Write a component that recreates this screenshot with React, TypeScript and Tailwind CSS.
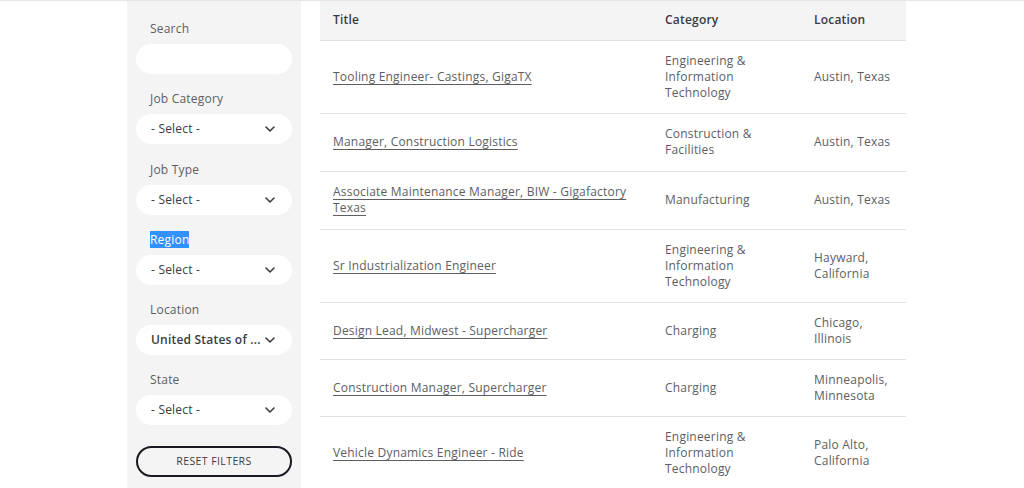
import { ReactNode } from 'react';

type Job = { title: string; category: string; location: string; h: string };

const jobs: Job[] = [
  { title: 'Tooling Engineer- Castings, GigaTX', category: 'Engineering & Information Technology', location: 'Austin, Texas', h: 'h-[73px]' },
  { title: 'Manager, Construction Logistics', category: 'Construction & Facilities', location: 'Austin, Texas', h: 'h-[58px]' },
  { title: 'Associate Maintenance Manager, BIW - Gigafactory Texas', category: 'Manufacturing', location: 'Austin, Texas', h: 'h-[58px]' },
  { title: 'Sr Industrialization Engineer', category: 'Engineering & Information Technology', location: 'Hayward, California', h: 'h-[73px]' },
  { title: 'Design Lead, Midwest - Supercharger', category: 'Charging', location: 'Chicago, Illinois', h: 'h-[57px]' },
  { title: 'Construction Manager, Supercharger', category: 'Charging', location: 'Minneapolis, Minnesota', h: 'h-[57px]' },
  { title: 'Vehicle Dynamics Engineer - Ride', category: 'Engineering & Information Technology', location: 'Palo Alto, California', h: 'h-[73px]' },
];

function Chevron() {
  return (
    <svg width="10" height="6" viewBox="0 0 10 6" fill="none" className="shrink-0">
      <path d="M1 1l4 4 4-4" stroke="#393c41" strokeWidth="1.6" strokeLinecap="round" strokeLinejoin="round" />
    </svg>
  );
}

function Field({ label, children }: { label: ReactNode; children: ReactNode }) {
  return (
    <div className="mb-[17.3px]">
      <div className="h-4 pl-[14px] text-[12px] leading-4 text-[#5c5e62]">{label}</div>
      <div className="mt-[7px]">{children}</div>
    </div>
  );
}

function Select({ value, strong }: { value: string; strong?: boolean }) {
  return (
    <div className="flex h-[30px] items-center justify-between rounded-full bg-white pl-[15px] pr-[17px]">
      <span className={`text-[12px] text-[#393c41] ${strong ? 'font-semibold' : 'font-medium'}`}>{value}</span>
      <Chevron />
    </div>
  );
}

export default function App() {
  return (
    <div className="h-[488px] w-[1024px] overflow-hidden border-t border-[#e6e6e6] bg-white tracking-[0.2px]" style={{ fontFamily: '"Open Sans", "Liberation Sans", sans-serif' }}>
      <div className="flex">
        <aside className="ml-[127px] h-[487px] w-[174px] shrink-0 bg-[#f4f4f4] px-[9px] pt-[20px]">
          <Field label="Search">
            <div className="h-[30px] rounded-full bg-white" />
          </Field>
          <Field label="Job Category">
            <Select value="- Select -" />
          </Field>
          <Field label="Job Type">
            <Select value="- Select -" />
          </Field>
          <Field label={<span className="bg-[#3390ff] text-white">Region</span>}>
            <Select value="- Select -" />
          </Field>
          <Field label="Location">
            <Select value="United States of ..." strong />
          </Field>
          <Field label="State">
            <Select value="- Select -" />
          </Field>
          <button className="mt-[21px] flex h-[31px] w-full items-center justify-center rounded-full border-2 border-[#171a20] text-[10.5px] tracking-[0.4px] text-[#393c41]">
            RESET FILTERS
          </button>
        </aside>

        <div className="ml-[19px] w-[586px] shrink-0">
          <table className="w-full table-fixed border-collapse text-left text-[12px] leading-4 text-[#5c5e62]">
            <colgroup>
              <col className="w-[332px]" />
              <col className="w-[150px]" />
              <col className="w-[104px]" />
            </colgroup>
            <thead>
              <tr className="h-[39px] bg-[#f4f4f4] text-[#393c41]">
                <th className="px-[13px] font-semibold">Title</th>
                <th className="px-[13px] font-semibold">Category</th>
                <th className="px-[12px] font-semibold">Location</th>
              </tr>
            </thead>
            <tbody>
              {jobs.map(j => (
                <tr key={j.title} className={`${j.h} border-t border-[#e2e2e2]`}>
                  <td className="py-3 pl-[13px] pr-[22px] align-middle">
                    <a className="underline decoration-[#5c5e62] underline-offset-[3px]">{j.title}</a>
                  </td>
                  <td className="py-3 pl-[13px] pr-[16px] align-middle">{j.category}</td>
                  <td className="py-3 pl-[12px] pr-[12px] align-middle">{j.location}</td>
                </tr>
              ))}
            </tbody>
          </table>
        </div>
      </div>
    </div>
  );
}
